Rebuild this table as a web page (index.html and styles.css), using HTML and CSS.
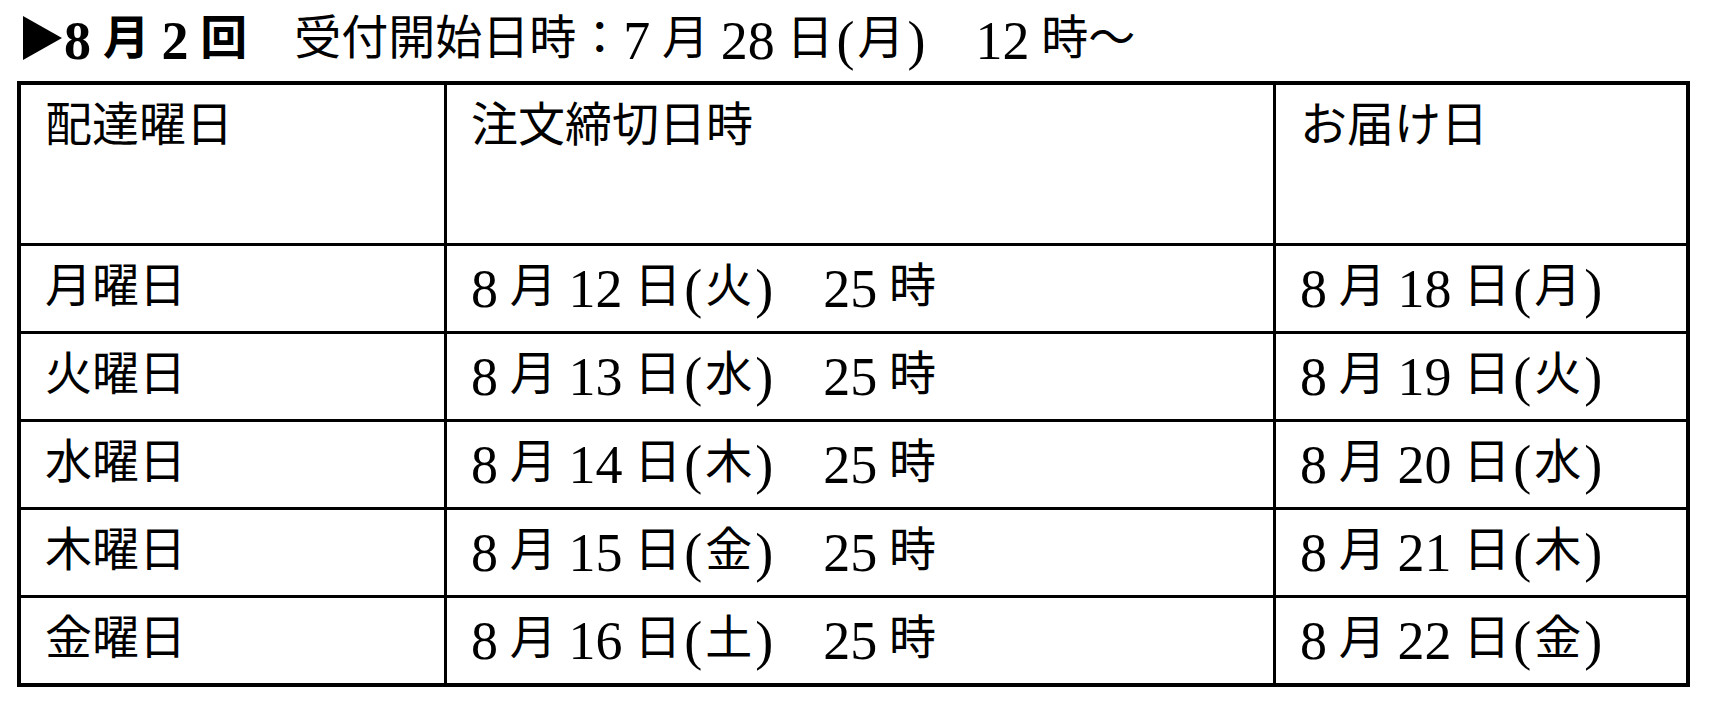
FILE: index.html
```html
<!DOCTYPE html>
<html lang="ja">
<head>
<meta charset="utf-8">
<title>8月2回 受付開始日時</title>
<link rel="stylesheet" href="styles.css">
</head>
<body>
<div class="page">
  <h1 class="title"><span class="lead"><svg class="tri" viewBox="0 0 39 44" aria-hidden="true"><polygon points="0,0 39,22 0,44" fill="#000"/></svg><span class="n">8</span> 月 <span class="n">2</span> 回</span>　受付開始日時：<span class="n">7</span> 月 <span class="n">28</span> 日<span class="n p">(</span>月<span class="n p">)</span>　<span class="n">12</span> 時～</h1>
  <div class="sched">
    <div class="cell">配達曜日</div>
    <div class="cell">注文締切日時</div>
    <div class="cell">お届け日</div>

    <div class="cell">月曜日</div>
    <div class="cell"><span class="n">8</span> 月 <span class="n">12</span> 日<span class="n p">(</span>火<span class="n p">)</span>　<span class="n">25</span> 時</div>
    <div class="cell"><span class="n">8</span> 月 <span class="n">18</span> 日<span class="n p">(</span>月<span class="n p">)</span></div>

    <div class="cell">火曜日</div>
    <div class="cell"><span class="n">8</span> 月 <span class="n">13</span> 日<span class="n p">(</span>水<span class="n p">)</span>　<span class="n">25</span> 時</div>
    <div class="cell"><span class="n">8</span> 月 <span class="n">19</span> 日<span class="n p">(</span>火<span class="n p">)</span></div>

    <div class="cell">水曜日</div>
    <div class="cell"><span class="n">8</span> 月 <span class="n">14</span> 日<span class="n p">(</span>木<span class="n p">)</span>　<span class="n">25</span> 時</div>
    <div class="cell"><span class="n">8</span> 月 <span class="n">20</span> 日<span class="n p">(</span>水<span class="n p">)</span></div>

    <div class="cell">木曜日</div>
    <div class="cell"><span class="n">8</span> 月 <span class="n">15</span> 日<span class="n p">(</span>金<span class="n p">)</span>　<span class="n">25</span> 時</div>
    <div class="cell"><span class="n">8</span> 月 <span class="n">21</span> 日<span class="n p">(</span>木<span class="n p">)</span></div>

    <div class="cell">金曜日</div>
    <div class="cell"><span class="n">8</span> 月 <span class="n">16</span> 日<span class="n p">(</span>土<span class="n p">)</span>　<span class="n">25</span> 時</div>
    <div class="cell"><span class="n">8</span> 月 <span class="n">22</span> 日<span class="n p">(</span>金<span class="n p">)</span></div>
  </div>
</div>
</body>
</html>
```

FILE: styles.css
```css
html, body {
  margin: 0;
  padding: 0;
  background: #ffffff;
  color: #000000;
}

body {
  font-family: "Liberation Serif", "Noto Sans CJK JP", serif;
}

.page {
  padding: 10px 0 0 17px;
}

.title {
  margin: 0 0 12px 0;
  padding-left: 6px;
  font-size: 47px;
  font-weight: normal;
  line-height: 56px;
  height: 59px;
  white-space: nowrap;
}

.lead {
  font-weight: bold;
}

.tri {
  width: 39px;
  height: 44px;
  margin-right: 2px;
  vertical-align: -6px;
}

.n {
  font-size: 54px;
  vertical-align: -5px;
  line-height: 1;
}

.p {
  margin: 0 3px;
}

.sched {
  display: grid;
  grid-template-columns: 423px 826px 410px;
  grid-template-rows: 158px repeat(5, 85px);
  gap: 3px;
  width: max-content;
  background: #000000;
  border: 4px solid #000000;
}

.cell {
  background: #ffffff;
  padding: 12px 0 0 24px;
  font-size: 47px;
  line-height: 56px;
  white-space: nowrap;
  overflow: hidden;
}
```
